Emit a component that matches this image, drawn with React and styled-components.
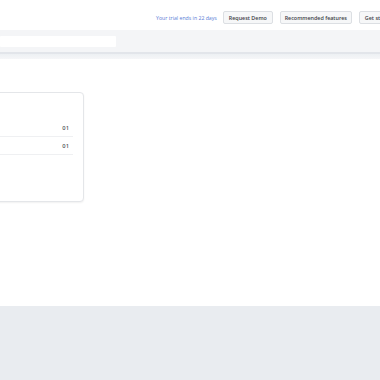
import styled, { createGlobalStyle } from "styled-components";

const GlobalStyle = createGlobalStyle`
  html, body {
    margin: 0;
    padding: 0;
    background: #ffffff;
  }
  body {
    font-family: "Open Sans", "Noto Sans", sans-serif;
  }
`;

const Page = styled.div`
  width: 380px;
  height: 380px;
  overflow: hidden;
  display: flex;
  flex-direction: column;
  background: #ffffff;
`;

const TopBar = styled.header`
  height: 30px;
  flex: 0 0 30px;
  display: flex;
  align-items: center;
  padding: 5px 0 0 156px;
  box-sizing: border-box;
  gap: 7px;
  background: #ffffff;
`;

const Trial = styled.span`
  flex: none;
  font-size: 5.2px;
  color: #5a7bd6;
  white-space: nowrap;
  margin-right: -1px;
`;

const Button = styled.button`
  flex: none;
  height: 13px;
  width: ${(p) => p.$w}px;
  padding: 0;
  border: 1px solid #dcdfe3;
  border-radius: 2px;
  background: #f6f7f8;
  color: #3d4147;
  font-family: inherit;
  font-size: 5.4px;
  font-weight: 600;
  white-space: nowrap;
  text-align: ${(p) => (p.$left ? "left" : "center")};
  padding-left: ${(p) => (p.$left ? "5px" : "0")};
`;

const SearchBand = styled.div`
  flex: 0 0 22px;
  display: flex;
  align-items: center;
  background: #f4f5f7;
  border-bottom: 2px solid #e2e5ea;
`;

const SearchInput = styled.div`
  width: 116px;
  height: 11px;
  background: #ffffff;
  border-radius: 1px;
`;

const Shade = styled.div`
  flex: 0 0 5px;
  background: linear-gradient(#edf0f3, #f5f6f8);
`;

const Content = styled.main`
  flex: 1;
  padding-top: 33px;
  background: #ffffff;
`;

const Card = styled.section`
  width: 201px;
  height: 110px;
  margin-left: -117px;
  box-sizing: border-box;
  border: 1px solid #e4e6e9;
  border-radius: 4px;
  box-shadow: 0 1px 2px rgba(0, 0, 0, 0.06);
  background: #ffffff;
  padding: 26px 10px 0 0;
`;

const Row = styled.div`
  height: 18px;
  display: flex;
  align-items: center;
  justify-content: flex-end;
  padding-right: 4px;
  border-bottom: 1px solid #eff0f2;
  box-sizing: border-box;
  font-size: 5.8px;
  font-weight: 600;
  color: #555a60;
`;

const Footer = styled.footer`
  flex: 0 0 74px;
  background: #e9ecf0;
`;

export default function App() {
  return (
    <>
      <GlobalStyle />
      <Page>
        <TopBar>
          <Trial>Your trial ends in 22 days</Trial>
          <Button $w={50}>Request Demo</Button>
          <Button $w={72}>Recommended features</Button>
          <Button $w={60} $left>Get started</Button>
        </TopBar>
        <SearchBand>
          <SearchInput />
        </SearchBand>
        <Shade />
        <Content>
          <Card>
            <Row>01</Row>
            <Row>01</Row>
          </Card>
        </Content>
        <Footer />
      </Page>
    </>
  );
}
